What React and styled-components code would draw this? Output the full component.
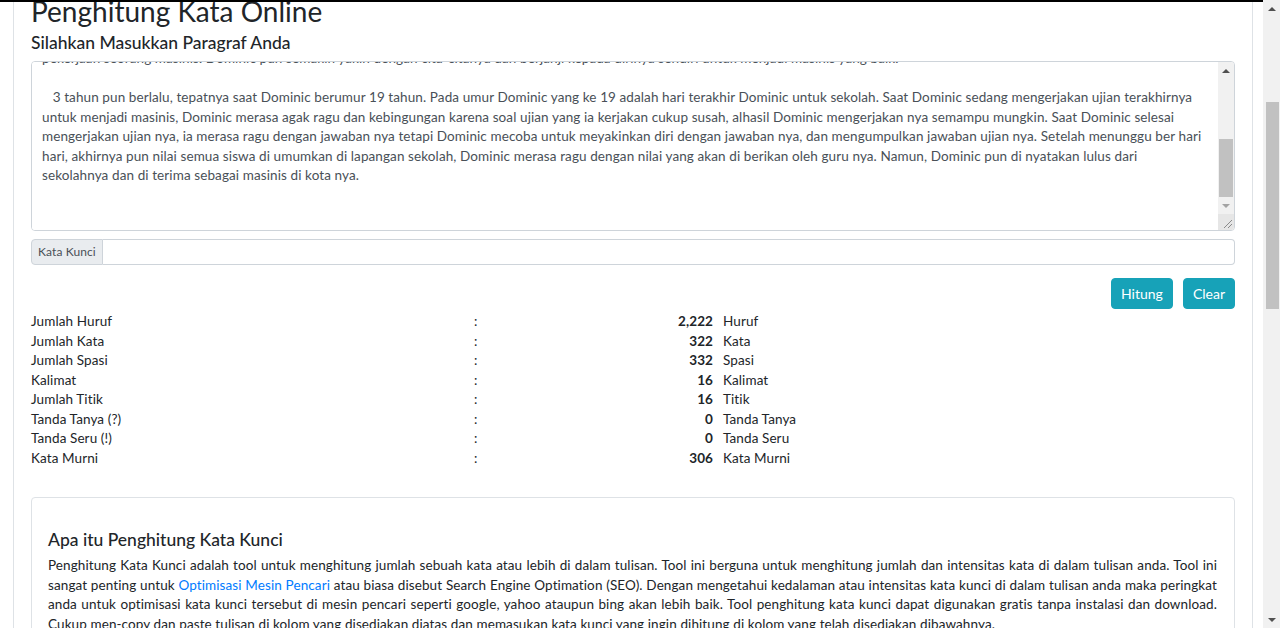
import React, { useLayoutEffect, useRef, useState } from "react";
import styled, { createGlobalStyle } from "styled-components";

const FONT = `Lato, "Noto Sans", Arial, sans-serif`;

const GlobalStyle = createGlobalStyle`
  *, *::before, *::after { box-sizing: border-box; }
  html, body { margin: 0; height: 100%; overflow: hidden; }
  body {
    font-family: ${FONT};
    font-size: 13.5px;
    letter-spacing: 0.1px;
    line-height: 19.5px;
    color: #212529;
    background: #fff;
  }
`;

const PARAGRAPHS = [
  [
    "   Dominic adalah seorang anak laki-laki yang tinggal di sebuah desa kecil di pinggir kota. Sejak kecil Dominic sangat menyukai kereta api, setiap sore ia selalu pergi ke stasiun",
    "untuk melihat kereta yang lewat bersama ayahnya. Ayah Dominic adalah seorang masinis yang sudah bekerja selama dua puluh tahun, dan Dominic sangat bangga kepada ayahnya.",
    "Suatu hari, Dominic berkata kepada ayahnya bahwa ia ingin menjadi seorang masinis seperti ayahnya. Ayahnya tersenyum dan berkata bahwa untuk menjadi masinis, Dominic harus",
    "belajar dengan giat dan tidak mudah menyerah. Sejak saat itu Dominic selalu belajar dengan sungguh-sungguh, ia membaca banyak buku tentang kereta api dan mesin-mesinnya.",
    "Ketika Dominic masuk sekolah menengah, ia memilih sekolah kejuruan yang mempunyai jurusan perkeretaapian. Di sekolah itu Dominic belajar banyak hal baru, mulai dari cara kerja",
    "mesin kereta, sinyal, hingga peraturan perjalanan kereta api. Dominic juga mempunyai banyak teman yang memiliki cita-cita yang sama dengannya, mereka sering belajar bersama",
    "di perpustakaan sekolah setelah jam pelajaran selesai. Walaupun terkadang Dominic merasa lelah, ia selalu ingat pesan ayahnya untuk tidak mudah menyerah dan terus berusaha.",
    "Pada tahun kedua, Dominic mengikuti praktek kerja lapangan di stasiun besar di kota. Di sana ia bertemu dengan banyak masinis senior yang mengajarinya banyak hal tentang",
    "pekerjaan seorang masinis. Dominic pun semakin yakin dengan cita-citanya dan berjanji kepada dirinya sendiri untuk menjadi masinis yang baik.",
  ],
  [
    "   3 tahun pun berlalu, tepatnya saat Dominic berumur 19 tahun. Pada umur Dominic yang ke 19 adalah hari terakhir Dominic untuk sekolah. Saat Dominic sedang mengerjakan ujian terakhirnya",
    "untuk menjadi masinis, Dominic merasa agak ragu dan kebingungan karena soal ujian yang ia kerjakan cukup susah, alhasil Dominic mengerjakan nya semampu mungkin. Saat Dominic selesai",
    "mengerjakan ujian nya, ia merasa ragu dengan jawaban nya tetapi Dominic mecoba untuk meyakinkan diri dengan jawaban nya, dan mengumpulkan jawaban ujian nya. Setelah menunggu ber hari",
    "hari, akhirnya pun nilai semua siswa di umumkan di lapangan sekolah, Dominic merasa ragu dengan nilai yang akan di berikan oleh guru nya. Namun, Dominic pun di nyatakan lulus dari",
    "sekolahnya dan di terima sebagai masinis di kota nya.",
  ],
];

const SAMPLE_TEXT = PARAGRAPHS.map((p) => p.join("\n")).join("\n\n") + "\n\n";

const STATS = [
  { label: "Jumlah Huruf", value: "2,222", unit: "Huruf" },
  { label: "Jumlah Kata", value: "322", unit: "Kata" },
  { label: "Jumlah Spasi", value: "332", unit: "Spasi" },
  { label: "Kalimat", value: "16", unit: "Kalimat" },
  { label: "Jumlah Titik", value: "16", unit: "Titik" },
  { label: "Tanda Tanya (?)", value: "0", unit: "Tanda Tanya" },
  { label: "Tanda Seru (!)", value: "0", unit: "Tanda Seru" },
  { label: "Kata Murni", value: "306", unit: "Kata Murni" },
];

// thumb size/offset from an element's scroll metrics
function measure(el, trackEl) {
  const track = trackEl.clientHeight;
  return {
    size: Math.round((track * el.clientHeight) / el.scrollHeight),
    top: Math.round((track * el.scrollTop) / el.scrollHeight),
  };
}

function ScrollBar({ trackRef, thumb, $small, atEnd, corner }) {
  return (
    <Bar $small={$small}>
      <BarButton>
        <Arrow $dir="up" />
      </BarButton>
      <Track ref={trackRef}>
        <Thumb $small={$small} style={{ marginTop: thumb.top, height: thumb.size }} />
      </Track>
      <BarButton>
        <Arrow $dir="down" $dim={atEnd} />
      </BarButton>
      {corner && (
        <Resizer>
          <svg width="16" height="16" viewBox="0 0 16 16">
            <path d="M14 6 L6 14 M14 10 L10 14" stroke="#8a8a8a" strokeWidth="1" fill="none" />
          </svg>
        </Resizer>
      )}
    </Bar>
  );
}

function App() {
  const viewRef = useRef(null);
  const titleRef = useRef(null);
  const areaRef = useRef(null);
  const pageTrackRef = useRef(null);
  const areaTrackRef = useRef(null);
  const [pageThumb, setPageThumb] = useState({ top: 0, size: 0 });
  const [areaThumb, setAreaThumb] = useState({ top: 0, size: 0 });

  useLayoutEffect(() => {
    const view = viewRef.current;
    const title = titleRef.current;
    const top =
      title.getBoundingClientRect().top - view.getBoundingClientRect().top + view.scrollTop;
    view.scrollTop = Math.round(top + 7);
    const area = areaRef.current;
    area.scrollTop = area.scrollHeight;
    setPageThumb(measure(view, pageTrackRef.current));
    setAreaThumb(measure(area, areaTrackRef.current));
  }, []);

  return (
    <>
      <GlobalStyle />
      <Frame>
        <Column>
          <TopEdge />
          <Viewport ref={viewRef}>
            <Shell>
              <Navbar>
                <Brand>Penghitung Kata</Brand>
                <NavLink>Beranda</NavLink>
                <NavLink>Tools</NavLink>
                <NavLink>Kontak</NavLink>
              </Navbar>

              <Main>
                <Card>
                  <Breadcrumb>
                    <Crumb>Beranda</Crumb>
                    <Crumb>Tools</Crumb>
                    <Crumb $active>Penghitung Kata Online</Crumb>
                  </Breadcrumb>
                  <Notice>
                    Tool gratis untuk menghitung jumlah huruf, kata, spasi dan kalimat di dalam tulisan anda.
                    <br />
                    Masukkan paragraf lalu tekan tombol Hitung untuk melihat hasilnya.
                  </Notice>

                  <Title ref={titleRef}>Penghitung Kata Online</Title>
                  <Subtitle>Silahkan Masukkan Paragraf Anda</Subtitle>

                  <AreaFrame>
                    <TextArea ref={areaRef} defaultValue={SAMPLE_TEXT} spellCheck={false} />
                    <ScrollBar trackRef={areaTrackRef} thumb={areaThumb} $small atEnd corner />
                  </AreaFrame>

                  <KeywordGroup>
                    <KeywordLabel>Kata Kunci</KeywordLabel>
                    <KeywordInput type="text" />
                  </KeywordGroup>

                  <Actions>
                    <Button type="button">Hitung</Button>
                    <Button type="button">Clear</Button>
                  </Actions>

                  <Stats>
                    {STATS.map((s) => (
                      <StatRow key={s.label}>
                        <span>{s.label}</span>
                        <span>:</span>
                        <StatValue>{s.value}</StatValue>
                        <StatUnit>{s.unit}</StatUnit>
                      </StatRow>
                    ))}
                  </Stats>

                  <Article>
                    <ArticleHeading>Apa itu Penghitung Kata Kunci</ArticleHeading>
                    <Paragraph>
                      <Line>
                        Penghitung Kata Kunci adalah tool untuk menghitung jumlah sebuah kata atau lebih di dalam tulisan. Tool ini berguna untuk menghitung jumlah dan intensitas kata di dalam tulisan anda. Tool ini
                      </Line>
                      <Line>
                        sangat penting untuk <Link href="#">Optimisasi Mesin Pencari</Link> atau biasa disebut Search Engine Optimation (SEO). Dengan mengetahui kedalaman atau intensitas kata kunci di dalam tulisan anda maka peringkat
                      </Line>
                      <Line>
                        anda untuk optimisasi kata kunci tersebut di mesin pencari seperti google, yahoo ataupun bing akan lebih baik. Tool penghitung kata kunci dapat digunakan gratis tanpa instalasi dan download.
                      </Line>
                      <Line $last>
                        Cukup men-copy dan paste tulisan di kolom yang disediakan diatas dan memasukan kata kunci yang ingin dihitung di kolom yang telah disediakan dibawahnya.
                      </Line>
                    </Paragraph>

                    <ArticleHeading>Cara Menggunakan Penghitung Kata</ArticleHeading>
                    <Steps>
                      <li>Salin paragraf yang ingin dihitung, lalu tempel ke dalam kolom di atas.</li>
                      <li>Isi kolom Kata Kunci jika ingin menghitung intensitas kata tertentu.</li>
                      <li>Tekan tombol Hitung untuk melihat hasil perhitungan.</li>
                      <li>Tekan tombol Clear untuk mengosongkan kolom dan memulai dari awal.</li>
                    </Steps>

                    <ArticleHeading>Apa itu Kata Murni</ArticleHeading>
                    <Paragraph>
                      Kata murni adalah jumlah kata yang tersisa setelah angka dan tanda baca dihilangkan dari tulisan. Nilai ini
                      membantu anda mengetahui panjang tulisan yang sebenarnya tanpa dipengaruhi oleh angka ataupun simbol.
                    </Paragraph>
                  </Article>
                </Card>
              </Main>

              <Footer>© 2020 Penghitung Kata Online. Semua hak dilindungi.</Footer>
            </Shell>
          </Viewport>
        </Column>
        <ScrollBar trackRef={pageTrackRef} thumb={pageThumb} />
      </Frame>
    </>
  );
}

const Frame = styled.div`
  display: flex;
  height: 100vh;
`;

const Column = styled.div`
  flex: 1;
  min-width: 0;
  display: flex;
  flex-direction: column;
`;

const TopEdge = styled.div`
  flex: none;
  height: 2px;
  background: #000;
`;

const Viewport = styled.div`
  flex: 1;
  overflow: hidden;
`;

const Bar = styled.div`
  flex: none;
  width: ${(p) => (p.$small ? "16px" : "17px")};
  display: flex;
  flex-direction: column;
  background: #f1f1f1;
`;

const BarButton = styled.div`
  flex: none;
  height: 17px;
  display: flex;
  align-items: center;
  justify-content: center;
`;

const Arrow = styled.span`
  width: 0;
  height: 0;
  border-left: 4px solid transparent;
  border-right: 4px solid transparent;
  ${(p) =>
    p.$dir === "up"
      ? `border-bottom: 4px solid ${p.$dim ? "#a3a3a3" : "#505050"};`
      : `border-top: 4px solid ${p.$dim ? "#a3a3a3" : "#505050"};`}
`;

const Track = styled.div`
  flex: 1;
  min-height: 0;
  display: flex;
  flex-direction: column;
`;

const Thumb = styled.div`
  flex: none;
  margin-left: ${(p) => (p.$small ? "1px" : "3px")};
  margin-right: 1px;
  background: #c1c1c1;
`;

const Resizer = styled.div`
  flex: none;
  height: 16px;
  background: #e6e6e6;
  display: flex;

  svg {
    display: block;
  }
`;

const Shell = styled.div`
  display: flex;
  flex-direction: column;
  min-height: 1793px;
`;

const Navbar = styled.nav`
  height: 56px;
  display: flex;
  align-items: center;
  gap: 20px;
  padding: 0 24px;
  background: #343a40;
`;

const Brand = styled.span`
  color: #fff;
  font-size: 18px;
  margin-right: 16px;
`;

const NavLink = styled.span`
  color: rgba(255, 255, 255, 0.6);
  font-size: 14px;
`;

const Main = styled.main`
  padding: 20px 10px 0 13px;
`;

const Card = styled.section`
  border: 1px solid #dee2e6;
  border-radius: 4px;
  padding: 17px;
`;

const Breadcrumb = styled.ol`
  display: flex;
  gap: 8px;
  list-style: none;
  margin: 0 0 16px;
  padding: 10px 14px;
  background: #e9ecef;
  border-radius: 4px;
`;

const Crumb = styled.li`
  color: ${(p) => (p.$active ? "#6c757d" : "#007bff")};
  & + &::before {
    content: "/";
    color: #6c757d;
    margin-right: 8px;
  }
`;

const Notice = styled.div`
  margin-bottom: 35px;
  padding: 12px 14px;
  border: 1px solid #bee5eb;
  border-radius: 4px;
  background: #d1ecf1;
  color: #0c5460;
`;

const Title = styled.h1`
  margin: 0;
  font-size: 28px;
  font-weight: 400;
  letter-spacing: 0;
  line-height: 1.2;
  color: #212529;
`;

const Subtitle = styled.h2`
  margin: 4px 0 8px;
  font-size: 17.5px;
  font-weight: 500;
  letter-spacing: 0;
  line-height: 1.2;
  color: #212529;
`;

const AreaFrame = styled.div`
  display: flex;
  height: 170px;
  border: 1px solid #ced4da;
  border-radius: 4px;
  overflow: hidden;
`;

const TextArea = styled.textarea`
  flex: 1;
  min-width: 0;
  margin: 0;
  padding: 6px 10px 5px;
  border: 0;
  font-family: ${FONT};
  font-size: 13.5px;
  letter-spacing: 0.1px;
  line-height: 19.5px;
  color: #495057;
  white-space: pre;
  overflow: hidden;
  resize: none;
  outline: none;
`;

const KeywordGroup = styled.div`
  display: flex;
  height: 26px;
  margin-top: 8px;
`;

const KeywordLabel = styled.span`
  display: flex;
  align-items: center;
  padding: 0 6px;
  border: 1px solid #ced4da;
  border-radius: 4px 0 0 4px;
  background: #e9ecef;
  font-size: 12px;
  color: #495057;
`;

const KeywordInput = styled.input`
  flex: 1;
  min-width: 0;
  margin: 0;
  border: 1px solid #ced4da;
  border-left: 0;
  border-radius: 0 4px 4px 0;
  outline: none;
`;

const Actions = styled.div`
  display: flex;
  justify-content: flex-end;
  gap: 10px;
  margin-top: 13px;
`;

const Button = styled.button`
  height: 31px;
  padding: 0 9px;
  border: 1px solid #17a2b8;
  border-radius: 4px;
  background: #17a2b8;
  color: #fff;
  font-family: ${FONT};
  font-size: 14px;
  cursor: pointer;
`;

const Stats = styled.div`
  margin-top: 3px;
`;

const StatRow = styled.div`
  display: grid;
  grid-template-columns: 443px 40px 199px 1fr;
`;

const StatValue = styled.span`
  text-align: right;
  font-weight: 700;
`;

const StatUnit = styled.span`
  padding-left: 10px;
`;

const Article = styled.article`
  margin-top: 29px;
  padding: 31px 17px 24px 16px;
  border: 1px solid #dee2e6;
  border-radius: 4px;
`;

const ArticleHeading = styled.h3`
  margin: 0 0 6px;
  font-size: 17.5px;
  font-weight: 500;
  letter-spacing: 0;
  line-height: 1.2;
`;

const Paragraph = styled.p`
  margin: 0 0 18px;
`;

const Line = styled.span`
  display: block;
  text-align: justify;
  text-align-last: ${(p) => (p.$last ? "left" : "justify")};
`;

const Link = styled.a`
  color: #007bff;
  text-decoration: none;
`;

const Steps = styled.ol`
  margin: 0 0 18px;
  padding-left: 22px;
`;

const Footer = styled.footer`
  margin-top: auto;
  padding: 24px;
  background: #343a40;
  color: rgba(255, 255, 255, 0.7);
  text-align: center;
`;

export default App;
